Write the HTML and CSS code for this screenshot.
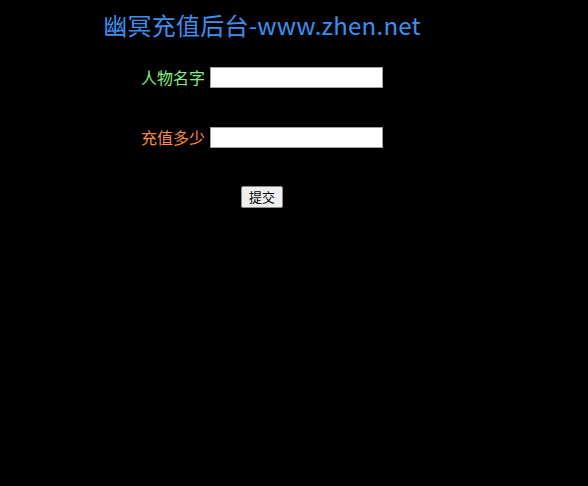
FILE: index.html
```html
<!DOCTYPE html>
<html lang="zh">
<head>
<meta charset="utf-8">
<title>幽冥充值后台</title>
<link rel="stylesheet" href="styles.css">
</head>
<body>
<div class="page">
  <h1 class="title">幽冥充值后台-www.zhen.net</h1>
  <form class="form">
    <div class="row">
      <label class="label label-name">人物名字</label>
      <input class="field" type="text">
    </div>
    <div class="row row-second">
      <label class="label label-amount">充值多少</label>
      <input class="field" type="text">
    </div>
    <div class="row row-submit">
      <button class="submit" type="button">提交</button>
    </div>
  </form>
</div>
</body>
</html>
```
FILE: styles.css
```css
html, body {
  margin: 0;
  padding: 0;
  background: #000;
}
body {
  font-family: "Noto Sans CJK SC", "Noto Sans", sans-serif;
}
.page {
  width: 524px;
  padding-top: 10px;
}
.title {
  margin: 0;
  font-size: 24px;
  line-height: 30px;
  font-weight: normal;
  letter-spacing: 0.25px;
  color: #3a90f0;
  text-align: center;
  white-space: nowrap;
}
.form {
  margin: 0;
}
.row {
  display: flex;
  justify-content: center;
  align-items: center;
  gap: 5px;
  margin-top: 27px;
}
.row-second {
  margin-top: 39px;
}
.row-submit {
  margin-top: 38px;
}
.label {
  font-size: 16px;
  line-height: 21px;
  width: 64px;
  white-space: nowrap;
}
.label-name {
  color: #80f080;
}
.label-amount {
  color: #ff8a3c;
}
.field {
  box-sizing: border-box;
  width: 173px;
  height: 21px;
  margin: 0;
  padding: 1px 2px;
  border: 1px solid #a0a0a0;
  background: #fff;
}
.submit {
  box-sizing: border-box;
  width: 42px;
  height: 22px;
  margin: 0;
  padding: 0;
  font-family: "Noto Sans CJK SC", sans-serif;
  font-size: 13px;
  line-height: 18px;
  color: #000;
  background: #efefef;
  border: 1px solid #8a8a8a;
  border-radius: 2px;
}
```
